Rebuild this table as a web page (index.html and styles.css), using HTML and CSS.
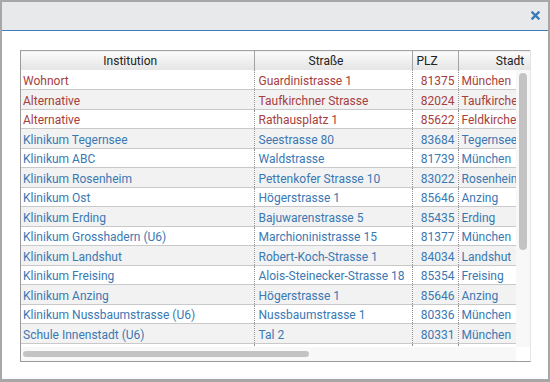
FILE: index.html
```html
<!DOCTYPE html>
<html lang="de">

<head>
    <meta charset="UTF-8">
    <meta name="viewport" content="width=device-width, initial-scale=1.0">
    <title>Institutionen</title>
    <link rel="stylesheet" href="styles.css">
</head>

<body>
    <div class="modal">
        <div class="modal__header">
            <button class="modal__close" type="button" title="Schließen">
                <svg width="9" height="9" viewBox="0 0 9 9">
                    <path d="M1.5 1.5 L7.5 7.5 M7.5 1.5 L1.5 7.5" stroke="#3b79b6" stroke-width="2.4" stroke-linecap="square" />
                </svg>
            </button>
        </div>
        <div class="modal__body">
            <div class="grid">
                <div class="grid__head">
                    <table class="grid__table">
                        <colgroup>
                            <col class="col-inst"><col class="col-str"><col class="col-plz"><col class="col-ort"><col>
                        </colgroup>
                        <tr>
                            <th>Institution</th>
                            <th>Straße</th>
                            <th>PLZ</th>
                            <th>Stadt</th>
                            <th></th>
                        </tr>
                    </table>
                </div>
                <div class="grid__body">
                    <div class="grid__view">
                        <table class="grid__table">
                            <colgroup>
                                <col class="col-inst"><col class="col-str"><col class="col-plz"><col class="col-ort"><col>
                            </colgroup>
                            <tbody>
                                <tr class="row--home"><td>Wohnort</td><td>Guardinistrasse 1</td><td class="num">81375</td><td>München</td><td></td></tr>
                                <tr class="row--home"><td>Alternative</td><td>Taufkirchner Strasse</td><td class="num">82024</td><td>Taufkirchen</td><td></td></tr>
                                <tr class="row--home"><td>Alternative</td><td>Rathausplatz 1</td><td class="num">85622</td><td>Feldkirchen</td><td></td></tr>
                                <tr><td>Klinikum Tegernsee</td><td>Seestrasse 80</td><td class="num">83684</td><td>Tegernsee</td><td></td></tr>
                                <tr><td>Klinikum ABC</td><td>Waldstrasse</td><td class="num">81739</td><td>München</td><td></td></tr>
                                <tr><td>Klinikum Rosenheim</td><td>Pettenkofer Strasse 10</td><td class="num">83022</td><td>Rosenheim</td><td></td></tr>
                                <tr><td>Klinikum Ost</td><td>Högerstrasse 1</td><td class="num">85646</td><td>Anzing</td><td></td></tr>
                                <tr><td>Klinikum Erding</td><td>Bajuwarenstrasse 5</td><td class="num">85435</td><td>Erding</td><td></td></tr>
                                <tr><td>Klinikum Grosshadern (U6)</td><td>Marchioninistrasse 15</td><td class="num">81377</td><td>München</td><td></td></tr>
                                <tr><td>Klinikum Landshut</td><td>Robert-Koch-Strasse 1</td><td class="num">84034</td><td>Landshut</td><td></td></tr>
                                <tr><td>Klinikum Freising</td><td>Alois-Steinecker-Strasse 18</td><td class="num">85354</td><td>Freising</td><td></td></tr>
                                <tr><td>Klinikum Anzing</td><td>Högerstrasse 1</td><td class="num">85646</td><td>Anzing</td><td></td></tr>
                                <tr><td>Klinikum Nussbaumstrasse (U6)</td><td>Nussbaumstrasse 1</td><td class="num">80336</td><td>München</td><td></td></tr>
                                <tr><td>Schule Innenstadt (U6)</td><td>Tal 2</td><td class="num">80331</td><td>München</td><td></td></tr>
                                <tr><td></td><td></td><td class="num"></td><td></td><td></td></tr>
                            </tbody>
                        </table>
                    </div>
                    <div class="scroll scroll--v"><div class="scroll__thumb"></div></div>
                    <div class="scroll scroll--h"><div class="scroll__thumb"></div></div>
                    <div class="scroll__corner"></div>
                </div>
            </div>
        </div>
    </div>
</body>

</html>
```

FILE: styles.css
```css
* {
    box-sizing: border-box;
}

body {
    margin: 0;
    font-family: Roboto, "Liberation Sans", sans-serif;
    font-size: 12px;
    background: #ffffff;
}

/* modal */
.modal {
    width: 550px;
    height: 382px;
    border: 2px solid #a7a7a7;
    border-bottom-width: 3px;
    background: #ffffff;
}

.modal__header {
    height: 29px;
    display: flex;
    align-items: center;
    justify-content: flex-end;
    padding-right: 8px;
    background: #e8e9eb;
    border-bottom: 1px solid #3f7ebd;
}

.modal__close {
    display: flex;
    padding: 0;
    border: 0;
    background: transparent;
    margin-top: -1px;
}

.modal__body {
    padding: 19px 0 0 18px;
}

/* grid */
.grid {
    width: 511px;
    border-left: 1px solid #9a9a9a;
    border-bottom: 1px solid #9a9a9a;
    border-right: 1px solid #e4e4e4;
}

.grid__head {
    overflow: hidden;
    height: 20px;
}

.grid__body {
    display: grid;
    grid-template-columns: 495px 14px;
    grid-template-rows: 277px 14px;
}

.grid__view {
    overflow: hidden;
}

.grid__table {
    width: 860px;
    table-layout: fixed;
    border-collapse: collapse;
}

.col-inst {
    width: 233px;
}

.col-str {
    width: 158px;
}

.col-plz {
    width: 46px;
}

.col-ort {
    width: 118px;
}

.grid__table th {
    height: 20px;
    padding: 0 16px 0 2px;
    font-weight: normal;
    color: #222222;
    text-align: center;
    background: linear-gradient(#fbfbfb, #e4e4e4);
    border: 1px solid #a3a3a3;
    border-left-color: #b5b5b5;
}

.grid__table th:first-child {
    border-left: 0;
}

.grid__table th:nth-child(3) {
    text-align: left;
    padding-left: 4px;
}

.grid__table td {
    height: 19.5px;
    padding: 3px 2px 0;
    white-space: nowrap;
    overflow: hidden;
    color: #3a78b4;
    border-bottom: 1px solid #c9c9c9;
    border-left: 1px dotted #8f8f8f;
}

.grid__table td:first-child {
    border-left: 0;
}

.grid__table td:nth-child(2) {
    padding-left: 4px;
}

.grid__table td:nth-child(4) {
    padding-left: 3px;
}

.grid__table tr:nth-child(even) td {
    background: #f2f2f2;
}

.grid__table .num {
    text-align: right;
    padding-right: 3px;
}

.row--home td {
    color: #a6403d;
}

/* scrollbars */
.scroll {
    background: #f8f8f8;
}

.scroll__thumb {
    background: #c3c3c3;
    border-radius: 4px;
}

.scroll--v {
    padding: 3px 3px 0;
}

.scroll--v .scroll__thumb {
    width: 8px;
    height: 177px;
}

.scroll--h {
    padding: 4px 0 0 2px;
}

.scroll--h .scroll__thumb {
    width: 286px;
    height: 6px;
    border-radius: 3px;
}

.scroll__corner {
    background: #ffffff;
}
```
